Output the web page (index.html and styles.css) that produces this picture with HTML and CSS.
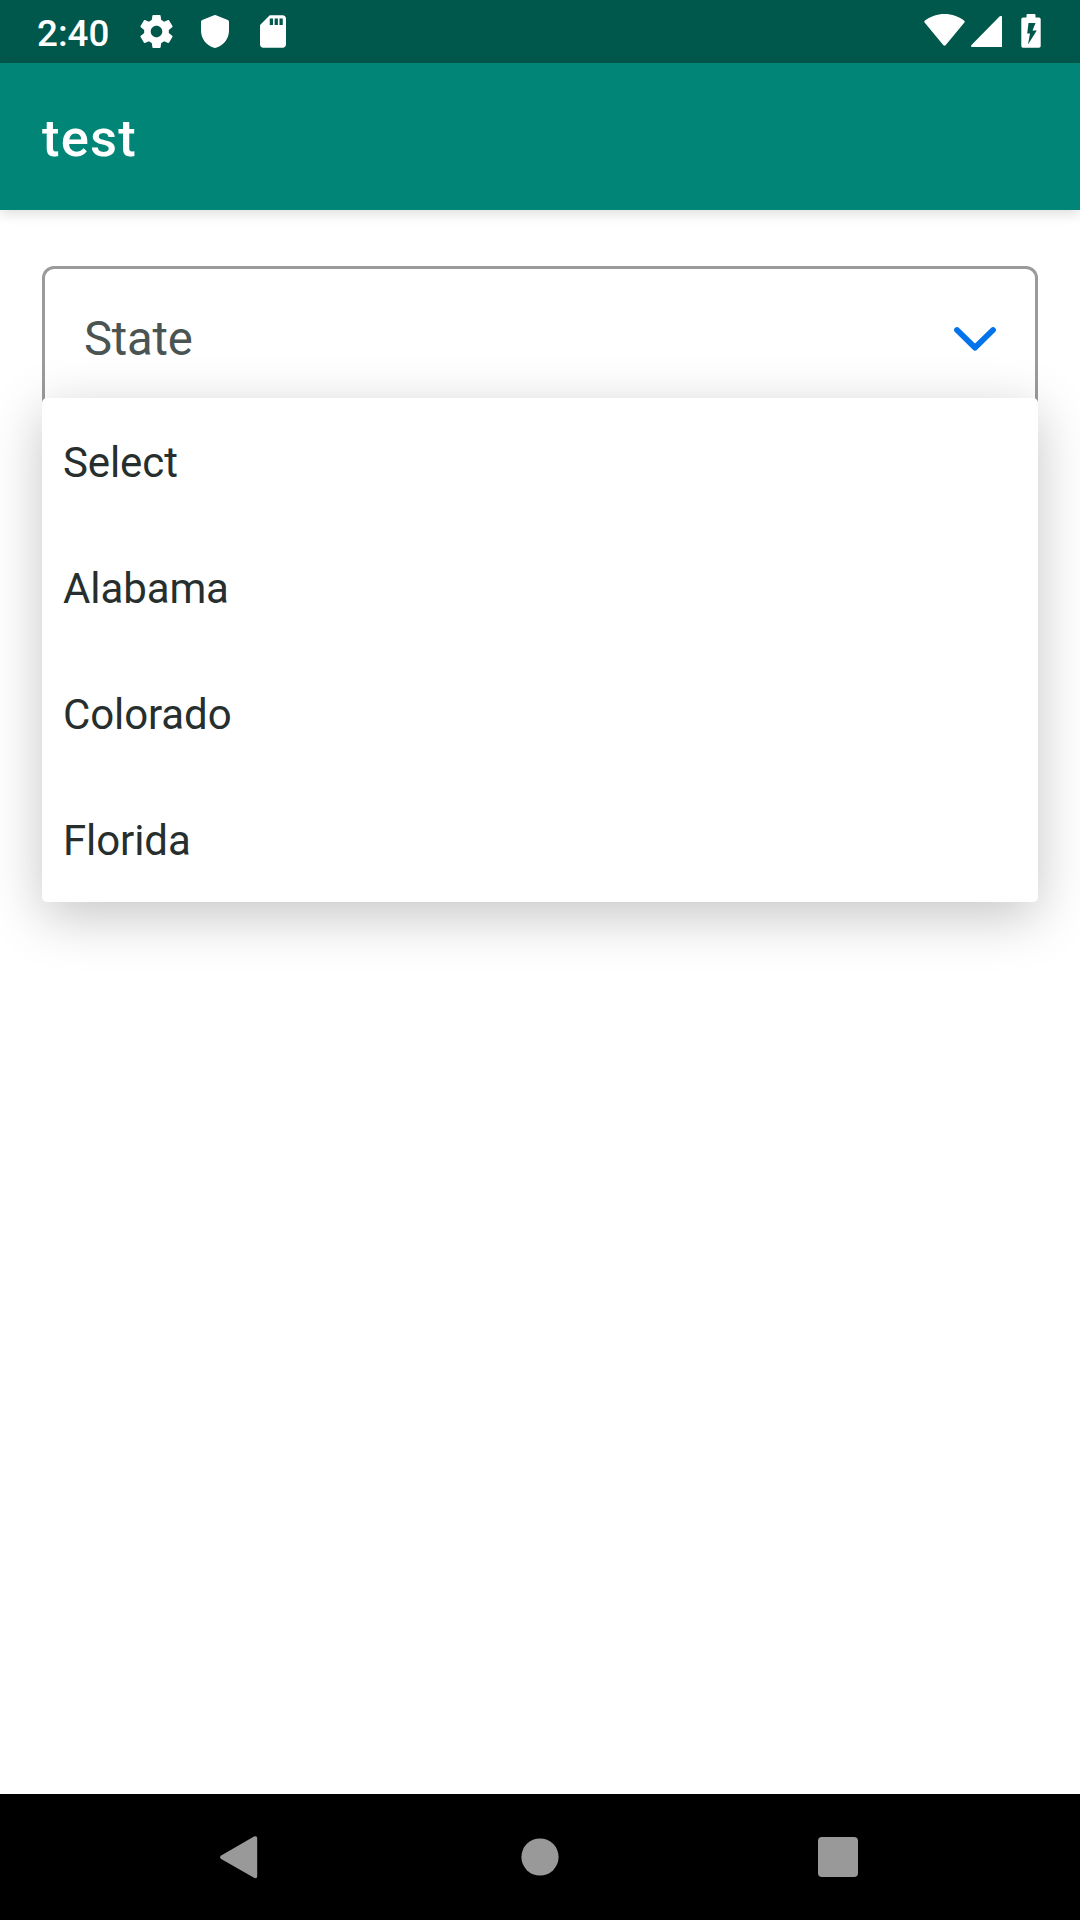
FILE: index.html
```html
<!DOCTYPE html>
<html lang="en">
<head>
<meta charset="utf-8">
<title>test</title>
<link rel="stylesheet" href="styles.css">
</head>
<body>
<div class="screen">
  <div class="status-bar">
    <span class="clock">2:40</span>
    <div class="notifications">
      <svg class="icon-gear" width="33" height="33" viewBox="2.2 2 19.6 20"><path fill="#fff" d="M19.43 12.98c.04-.32.07-.64.07-.98s-.03-.66-.07-.98l2.11-1.65c.19-.15.24-.42.12-.64l-2-3.46c-.12-.22-.39-.3-.61-.22l-2.49 1c-.52-.4-1.08-.73-1.69-.98l-.38-2.65C14.46 2.18 14.25 2 14 2h-4c-.25 0-.46.18-.49.42l-.38 2.65c-.61.25-1.17.59-1.69.98l-2.49-1c-.23-.09-.49 0-.61.22l-2 3.46c-.13.22-.07.49.12.64l2.11 1.65c-.04.32-.07.65-.07.98s.03.66.07.98l-2.11 1.65c-.19.15-.24.42-.12.64l2 3.46c.12.22.39.3.61.22l2.49-1c.52.4 1.08.73 1.69.98l.38 2.65c.03.24.24.42.49.42h4c.25 0 .46-.18.49-.42l.38-2.65c.61-.25 1.17-.59 1.69-.98l2.49 1c.23.09.49 0 .61-.22l2-3.46c.12-.22.07-.49-.12-.64l-2.11-1.65zM12 15.5c-1.93 0-3.5-1.57-3.5-3.5s1.57-3.5 3.5-3.5 3.5 1.57 3.5 3.5-1.57 3.5-3.5 3.5z"/></svg>
      <svg class="icon-shield" width="28" height="33" viewBox="0 0 28 33"><path fill="#fff" d="M13 .3Q14 -.2 15 .3L26.800 5Q28 5.500 28 6.800V15.500C28 24 22.500 30.500 15 32.800Q14 33.100 13 32.800C5.500 30.500 0 24 0 15.500V6.800Q0 5.500 1.200 5Z"/></svg>
      <svg class="icon-card" width="26" height="33" viewBox="4 2 16 20"><path fill="#fff" d="M18 2h-8L4.020 8 4 20c0 1.100.9 2 2 2h12c1.100 0 2-.9 2-2V4c0-1.100-.9-2-2-2zm-6 6h-2V4h2v4zm3 0h-2V4h2v4zm3 0h-2V4h2v4z"/></svg>
    </div>
    <div class="system">
      <svg width="41" height="32" viewBox="0 0 41 32"><path fill="#fff" d="M.8 8.800Q-.3 7.500 1 6.500C6.500 2.400 13 0 20.500 0S34.500 2.400 40 6.500Q41.300 7.500 40.200 8.800L21.800 31Q20.500 32.500 19.200 31Z"/></svg>
      <svg class="icon-signal" width="31" height="31" viewBox="0 0 31 31"><path fill="#fff" d="M28.500.6Q31-1.200 31 1.300V31H1Q-.8 31 .5 29Z"/></svg>
      <svg class="icon-battery" width="20" height="34" viewBox="0 0 20 34"><path fill="#fff" fill-rule="evenodd" d="M5.500 1Q5.500 0 6.500 0H13.500Q14.500 0 14.500 1V3.500H18Q19.700 3.500 19.700 5.200V32Q19.700 33.800 18 33.800H2Q.3 33.800 .3 32V5.200Q.3 3.500 2 3.500H5.500ZM7.500 9 6.200 19.500H9L7 30.500 15.800 16.500H11.500L14.500 9Z"/></svg>
    </div>
  </div>
  <div class="app-bar">test</div>
  <div class="content">
    <div class="select">
      <span class="select-label">State</span>
      <svg class="chevron" width="44" height="26" viewBox="0 0 44 26"><path fill="none" stroke="#0273eb" stroke-width="5.800" stroke-linecap="round" stroke-linejoin="round" d="M4 4 22 21.600 40 4"/></svg>
      <ul class="menu">
        <li>Select</li>
        <li>Alabama</li>
        <li>Colorado</li>
        <li>Florida</li>
      </ul>
    </div>
  </div>
  <div class="nav-bar">
    <svg width="38" height="43" viewBox="0 0 38 43"><path fill="#999" d="M34 .5Q37.200-.8 37.200 2.500V40Q37.200 43.300 34 41.800L1.200 23Q-1.200 21.300 1.200 19.500Z"/></svg>
    <svg class="nav-home" width="38" height="38" viewBox="0 0 38 38"><circle cx="19" cy="19" r="18.600" fill="#999"/></svg>
    <svg width="40" height="40" viewBox="0 0 40 40"><rect width="40" height="40" rx="4" fill="#999"/></svg>
  </div>
</div>
</body>
</html>
```
FILE: styles.css
```css
body {
  margin: 0;
  font-family: Roboto, sans-serif;
}

.screen {
  display: flex;
  flex-direction: column;
  width: 1080px;
  height: 1920px;
  overflow: hidden;
  background: #fff;
}

.status-bar {
  display: flex;
  align-items: flex-start;
  flex: none;
  box-sizing: border-box;
  height: 63px;
  padding: 0 38px 0 37px;
  background: #00574b;
  color: #fff;
}

.clock {
  width: 103px;
  padding-top: 3px;
  font-size: 36.75px;
  font-weight: 500;
  line-height: 62px;
}

.notifications {
  display: flex;
  gap: 28px;
  padding-top: 15px;
}

.icon-shield {
  margin-right: 3px;
}

.notifications svg,
.system svg {
  display: block;
}

.system {
  display: flex;
  margin-left: auto;
  padding-top: 14px;
}

.icon-signal {
  margin: 2px 19px 0 6px;
}

.icon-battery {
  margin-right: 1px;
}

.app-bar {
  display: flex;
  align-items: center;
  flex: none;
  box-sizing: border-box;
  height: 147px;
  padding: 2px 42px 0;
  background: #008577;
  box-shadow: 0 4px 12px rgba(0, 0, 0, 0.13);
  color: #fff;
  font-size: 52.5px;
  font-weight: 500;
  letter-spacing: 1.2px;
}

.content {
  flex: 1;
  padding: 56px 42px 0;
}

.select {
  position: relative;
  display: flex;
  align-items: center;
  justify-content: space-between;
  box-sizing: border-box;
  height: 147px;
  padding: 0 38px 2px 39px;
  border: 3px solid #9b9b9b;
  border-radius: 12px;
}

.select-label {
  color: #4a5452;
  font-size: 47.25px;
  letter-spacing: -0.2px;
}

.menu {
  position: absolute;
  top: 129px;
  left: -3px;
  width: 996px;
  margin: 0;
  padding: 0;
  border-radius: 5px;
  background: #fff;
  box-shadow: 0 14px 54px rgba(0, 0, 0, 0.23);
  list-style: none;
}

.menu li {
  display: flex;
  align-items: center;
  box-sizing: border-box;
  height: 126px;
  padding: 2px 0 0 21px;
  color: #272f2e;
  font-size: 42px;
  letter-spacing: -0.1px;
}

.nav-bar {
  display: flex;
  align-items: center;
  justify-content: space-between;
  flex: none;
  box-sizing: border-box;
  height: 126px;
  padding: 0 222px 0 220px;
  background: #000;
}

.nav-home {
  margin: 0 0 1px 3px;
}
```
